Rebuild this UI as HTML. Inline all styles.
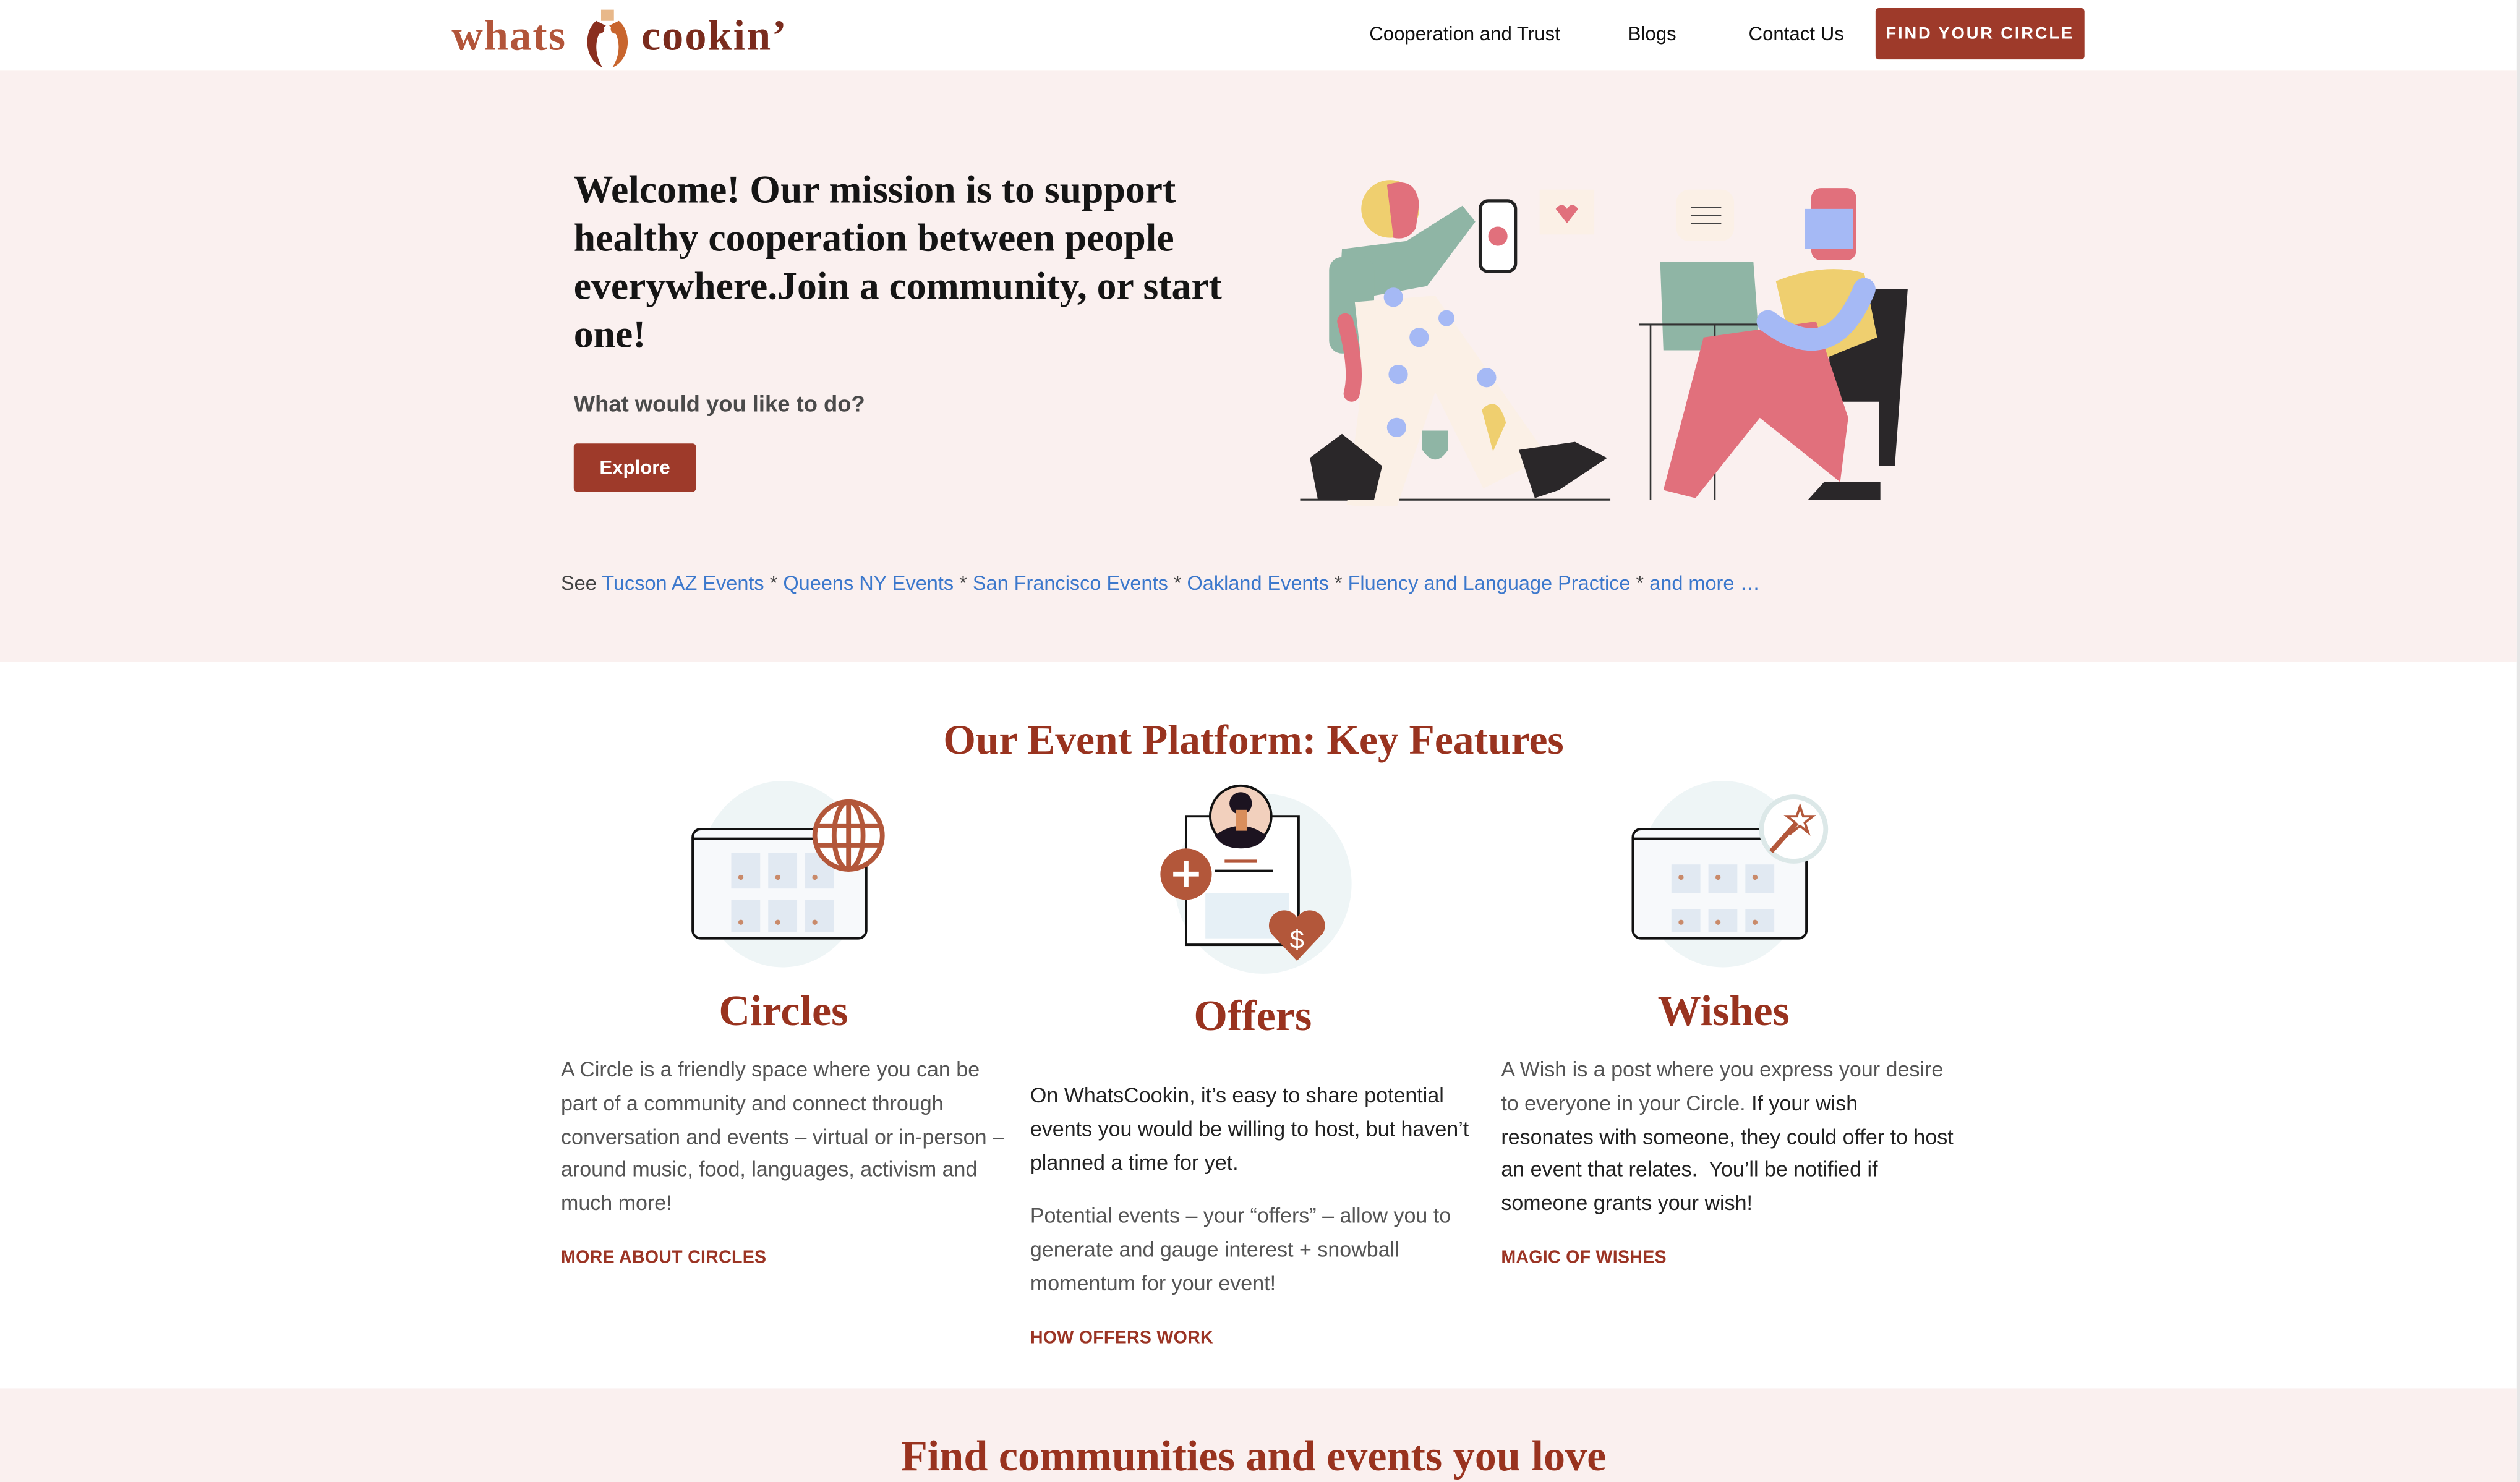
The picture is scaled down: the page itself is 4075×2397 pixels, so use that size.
<!DOCTYPE html>
<html><head><meta charset="utf-8">
<style>
html,body{margin:0;padding:0;width:4075px;height:2397px;overflow:hidden;background:#fff}
#w{width:1568px;height:923px;transform:scale(2.59885);transform-origin:0 0;position:relative;font-family:"Liberation Sans",sans-serif;overflow:hidden}
.a{position:absolute}
.serif{font-family:"Liberation Serif",serif;font-weight:bold}
.nav{font-size:12px;color:#111;top:14px}
.p{font-size:13.1px;line-height:20.8px;color:#555;width:276px}
.lk{font-size:11px;font-weight:bold;color:#9b3424;letter-spacing:.1px}
.blue{color:#3c78cc}
.ft{font-size:26px;color:#99331f;text-align:center}
</style></head><body><div id="w">
<!-- header -->
<div class="a" style="left:0;top:0;width:1566px;height:44px;background:#fff"></div>
<div class="a" style="left:1566px;top:0;width:2px;height:923px;background:#e6e6e6"></div>
<div class="a serif" style="left:281px;top:7px;font-size:27px;color:#b2553a;letter-spacing:.8px">whats</div>
<svg class="a" style="left:361px;top:3px" width="34" height="40" viewBox="0 0 34 40">
<path d="M13 3 h8 v7 h-8z" fill="#e8b88a"/>
<path d="M10 10 C2 16 2 34 14 39 C8 30 9 18 16 13 Z" fill="#8a2f1f"/>
<path d="M24 10 C32 16 32 34 20 39 C26 30 25 18 18 13 Z" fill="#c8652e"/>
<circle cx="12" cy="15" r="3" fill="#8a2f1f"/><circle cx="22" cy="15" r="3" fill="#c8652e"/>
</svg>
<div class="a serif" style="left:399px;top:7px;font-size:27px;color:#7a2b1d;letter-spacing:.8px">cookin’</div>
<div class="a nav" style="left:852px">Cooperation and Trust</div>
<div class="a nav" style="left:1013px">Blogs</div>
<div class="a nav" style="left:1088px">Contact Us</div>
<div class="a" style="left:1167px;top:5px;width:130px;height:32px;background:#9e3a2a;border-radius:2px;color:#fff;font-size:10.5px;font-weight:bold;letter-spacing:1.1px;text-align:center;line-height:32px">FIND YOUR CIRCLE</div>
<!-- hero -->
<div class="a" style="left:0;top:44px;width:1566px;height:368px;background:#faf0ef"></div>
<div class="a serif" style="left:357px;top:104px;width:420px;font-size:24.5px;line-height:30px;color:#151515">Welcome! Our mission is to support healthy cooperation between people everywhere.Join a community, or start one!</div>
<div class="a" style="left:357px;top:243px;font-size:14px;font-weight:bold;color:#4a4a4a">What would you like to do?</div>
<div class="a" style="left:357px;top:276px;width:76px;height:30px;background:#9e3a2a;border-radius:2px;color:#fff;font-size:12px;font-weight:bold;text-align:center;line-height:30px">Explore</div>
<!-- illustration -->
<svg class="a" style="left:805px;top:100px" width="390" height="215" viewBox="0 0 390 215">
<line x1="4" y1="211" x2="197" y2="211" stroke="#333" stroke-width="1.2"/>
<circle cx="60" cy="30" r="18" fill="#efcf6f"/>
<path d="M58 15 q18-6 20 12 l-2 15 q-5 8-14 6z" fill="#e1707c"/>
<path d="M30 55 l40-5 l35-22 l8 10 -30 40 -55 10 z" fill="#8fb5a5"/>
<rect x="22" y="60" width="28" height="60" rx="8" fill="#8fb5a5"/>
<path d="M38 88 l50-4 l70 100 -40 20 -30-60 -25 75 -30-5 10-80z" fill="#fbf0e6"/>
<path d="M32 100 q8 30 4 45" stroke="#e1707c" stroke-width="10" fill="none" stroke-linecap="round"/>
<g fill="#a5b9f5"><circle cx="62" cy="85" r="6"/><circle cx="78" cy="110" r="6"/><circle cx="65" cy="133" r="6"/><circle cx="120" cy="135" r="6"/><circle cx="64" cy="166" r="6"/><circle cx="95" cy="98" r="5"/></g>
<path d="M10 185 l20-15 25 20 -5 21 -35 0z" fill="#2a2729"/>
<path d="M140 180 l35-5 20 10 -30 20 -15 5z" fill="#2a2729"/>
<path d="M117 155 q10-10 15 8 l-8 18z" fill="#efcf6f"/>
<path d="M80 168 h16 v12 q-8 12-16 0z" fill="#8fb5a5"/>
<rect x="116" y="25" width="22" height="44" rx="5" fill="#fff" stroke="#222" stroke-width="2"/>
<circle cx="127" cy="47" r="6" fill="#e1707c"/>
<path d="M153 18 h34 v28 h-34z" fill="#fbf0e6" rx="6"/>
<path d="M163 30 q4-5 7 0 q3-5 7 0 l-7 9z" fill="#e1707c"/>
<rect x="238" y="18" width="36" height="32" rx="8" fill="#fbf0e6"/>
<g stroke="#444" stroke-width="1"><line x1="247" y1="29" x2="266" y2="29"/><line x1="247" y1="34" x2="266" y2="34"/><line x1="247" y1="39" x2="266" y2="39"/></g>
<path d="M228 63 h58 l4 55 h-60z" fill="#8fb5a5"/>
<line x1="215" y1="102" x2="300" y2="102" stroke="#333" stroke-width="1.2"/>
<line x1="222" y1="102" x2="222" y2="211" stroke="#333"/><line x1="262" y1="102" x2="262" y2="211" stroke="#333"/>
<path d="M332 80 h50 l-8 110 h-10 v-40 h-30z" fill="#2a2729"/>
<rect x="322" y="17" width="28" height="45" rx="6" fill="#e1707c"/>
<path d="M318 30 h30 v25 h-30z" fill="#a5b9f5"/>
<path d="M300 75 q30-12 55-5 l8 40 -50 20z" fill="#efcf6f"/>
<path d="M255 110 l70-10 20 60 -5 40 -50-40 -40 50 -20-5z" fill="#e1707c"/>
<path d="M295 100 q40 30 60-20" stroke="#a5b9f5" stroke-width="14" fill="none" stroke-linecap="round"/>
<path d="M330 200 l35 0 0 11 -45 0z" fill="#2a2729"/>
</svg>
<div class="a" style="left:349px;top:356px;font-size:12.5px;color:#444;white-space:nowrap">See <span class="blue">Tucson AZ Events</span> * <span class="blue">Queens NY Events</span> * <span class="blue">San Francisco Events</span> * <span class="blue">Oakland Events</span> * <span class="blue">Fluency and Language Practice</span> * <span class="blue">and more …</span></div>
<!-- features -->
<div class="a serif ft" style="left:0;width:1560px;top:446px;font-size:26px">Our Event Platform: Key Features</div>
<!-- icon 1 -->
<svg class="a" style="left:425px;top:486px" width="130" height="122" viewBox="0 0 130 122">
<ellipse cx="62" cy="58" rx="52" ry="58" fill="#eef5f6"/>
<rect x="6" y="30" width="108" height="68" rx="5" fill="#f7f9fb" stroke="#111" stroke-width="1.5"/>
<line x1="6" y1="36" x2="114" y2="36" stroke="#111" stroke-width="1.5"/>
<g fill="#e1e9f2"><rect x="30" y="45" width="18" height="22"/><rect x="53" y="45" width="18" height="22"/><rect x="76" y="45" width="18" height="22"/><rect x="30" y="74" width="18" height="20"/><rect x="53" y="74" width="18" height="20"/><rect x="76" y="74" width="18" height="20"/></g>
<g fill="#c98a6a"><circle cx="36" cy="60" r="1.6"/><circle cx="59" cy="60" r="1.6"/><circle cx="82" cy="60" r="1.6"/><circle cx="36" cy="88" r="1.6"/><circle cx="59" cy="88" r="1.6"/><circle cx="82" cy="88" r="1.6"/></g>
<circle cx="103" cy="34" r="21" fill="#fff" stroke="#b3573a" stroke-width="3"/>
<ellipse cx="103" cy="34" rx="9" ry="21" fill="none" stroke="#b3573a" stroke-width="3"/>
<line x1="82" y1="28" x2="124" y2="28" stroke="#b3573a" stroke-width="3"/><line x1="82" y1="40" x2="124" y2="40" stroke="#b3573a" stroke-width="3"/><line x1="103" y1="13" x2="103" y2="55" stroke="#b3573a" stroke-width="3"/>
</svg>
<!-- icon 2 -->
<svg class="a" style="left:716px;top:486px" width="130" height="124" viewBox="0 0 130 124">
<ellipse cx="70" cy="64" rx="55" ry="56" fill="#eef5f6"/>
<rect x="22" y="22" width="70" height="80" fill="#fff" stroke="#111" stroke-width="1.5"/>
<rect x="34" y="70" width="52" height="28" fill="#e6f0f6"/>
<line x1="46" y1="50" x2="66" y2="50" stroke="#b3573a" stroke-width="2"/><line x1="40" y1="56" x2="76" y2="56" stroke="#111" stroke-width="1.5"/>
<circle cx="56" cy="22" r="19" fill="#f2d0bd" stroke="#111" stroke-width="1.5"/>
<path d="M40 34 q16-12 32 0 q-4 8-16 8 q-12 0-16-8z" fill="#1c1320"/><circle cx="56" cy="14" r="7" fill="#1c1320"/><rect x="53" y="18" width="7" height="13" fill="#d98e5c"/>
<circle cx="22" cy="58" r="16" fill="#b3573a"/><path d="M22 50 v16 M14 58 h16" stroke="#fff" stroke-width="3"/>
<path d="M91 112 l-16-17 a9 9 0 0 1 16-10 a9 9 0 0 1 16 10z" fill="#b3573a"/>
<text x="91" y="104" font-family="Liberation Sans" font-size="16" fill="#fff" text-anchor="middle">$</text>
</svg>
<!-- icon 3 -->
<svg class="a" style="left:1010px;top:486px" width="130" height="122" viewBox="0 0 130 122">
<ellipse cx="62" cy="58" rx="52" ry="58" fill="#eef5f6"/>
<rect x="6" y="30" width="108" height="68" rx="5" fill="#f7f9fb" stroke="#111" stroke-width="1.5"/>
<line x1="6" y1="36" x2="114" y2="36" stroke="#111" stroke-width="1.5"/>
<g fill="#e1e9f2"><rect x="30" y="52" width="18" height="18"/><rect x="53" y="52" width="18" height="18"/><rect x="76" y="52" width="18" height="18"/><rect x="30" y="80" width="18" height="14"/><rect x="53" y="80" width="18" height="14"/><rect x="76" y="80" width="18" height="14"/></g>
<g fill="#c98a6a"><circle cx="36" cy="60" r="1.6"/><circle cx="59" cy="60" r="1.6"/><circle cx="82" cy="60" r="1.6"/><circle cx="36" cy="88" r="1.6"/><circle cx="59" cy="88" r="1.6"/><circle cx="82" cy="88" r="1.6"/></g>
<circle cx="106" cy="30" r="20" fill="#fff" stroke="#dce8e8" stroke-width="3"/>
<line x1="92" y1="44" x2="108" y2="26" stroke="#b3573a" stroke-width="3"/>
<path d="M110 16 l2 6 6 0 -5 4 2 6 -5-4 -5 4 2-6 -5-4 6 0z" fill="none" stroke="#b3573a" stroke-width="1.5"/>
</svg>
<div class="a serif ft" style="left:349px;width:277px;top:614px;font-size:27px">Circles</div>
<div class="a serif ft" style="left:641px;width:277px;top:617px;font-size:27px">Offers</div>
<div class="a serif ft" style="left:934px;width:277px;top:614px;font-size:27px">Wishes</div>
<div class="a p" style="left:349px;top:656px">A Circle is a friendly space where you can be part of a community and connect through conversation and events – virtual or in-person – around music, food, languages, activism and much more!</div>
<div class="a lk" style="left:349px;top:777px">MORE ABOUT CIRCLES</div>
<div class="a p" style="left:641px;top:672px;color:#222">On WhatsCookin, it’s easy to share potential events you would be willing to host, but haven’t planned a time for yet.</div>
<div class="a p" style="left:641px;top:747px">Potential events – your “offers” – allow you to generate and gauge interest + snowball momentum for your event!</div>
<div class="a lk" style="left:641px;top:827px">HOW OFFERS WORK</div>
<div class="a p" style="left:934px;top:656px;width:282px">A Wish is a post where you express your desire to everyone in your Circle. <span style="color:#222">If your wish resonates with someone, they could offer to host an event that relates.&nbsp; You’ll be notified if someone grants your wish!</span></div>
<div class="a lk" style="left:934px;top:777px">MAGIC OF WISHES</div>
<!-- bottom -->
<div class="a" style="left:0;top:864px;width:1566px;height:60px;background:#faf0ef"></div>
<div class="a serif ft" style="left:0;width:1560px;top:891px;font-size:27px">Find communities and events you love</div>
</div></body></html>
